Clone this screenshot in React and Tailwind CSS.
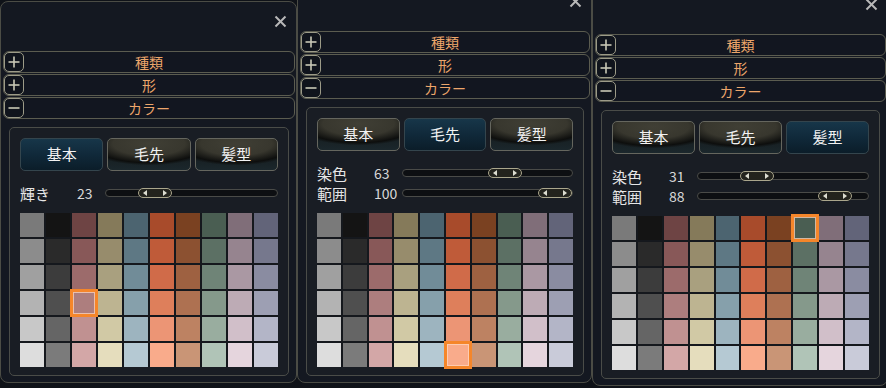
import React from 'react';

const COLORS = [
  ['#7a7a7a', '#8c8c8c', '#a0a0a0', '#b3b3b3', '#c8c8c8', '#dddddd'],
  ['#141414', '#2a2a2a', '#3c3c3c', '#4f4f4f', '#656565', '#7b7b7b'],
  ['#6e4444', '#885858', '#9c6b6b', '#ad7e7e', '#c09191', '#d3a7a7'],
  ['#857a5a', '#978c6c', '#a9a07f', '#bdb491', '#d1c9a5', '#e5ddbd'],
  ['#4c6470', '#5e7884', '#718c98', '#86a0ab', '#9db4bf', '#b5c9d3'],
  ['#a84b2b', '#bf5b39', '#d06b49', '#de7f5b', '#ec9575', '#f9ab8b'],
  ['#7a4121', '#8c5131', '#9e6141', '#ae7151', '#bd8262', '#c99576'],
  ['#4a5e52', '#5c7064', '#6f8477', '#85998b', '#99ad9f', '#b0c4b7'],
  ['#806e79', '#96848f', '#aa98a3', '#bdabb5', '#d1bfc9', '#e5d5dd'],
  ['#626479', '#76788d', '#8a8ca1', '#9d9fb3', '#b3b5c7', '#c9cbd9'],
];

const PANELS = [
  { tab: 0, sliders: [['輝き', 23]], sel: [3, 2], className: 'mt-[1px] w-[297px]' },
  { tab: 1, sliders: [['染色', 63], ['範囲', 100]], sel: [5, 5], className: 'mt-[-19px] w-[295px]' },
  { tab: 2, sliders: [['染色', 31], ['範囲', 88]], sel: [0, 7], className: 'mt-[-16px] w-[296px]' },
];

const font = { fontFamily: '"Noto Sans CJK JP", "Noto Sans", sans-serif' };

function SignBox({ open }) {
  return (
    <div className="w-[20px] h-[20px] rounded-[5px] border-[1.5px] border-[#9c9b88] bg-[#10141c] flex items-center justify-center">
      <svg width="14" height="14" viewBox="0 0 14 14">
        <line x1="1.5" y1="7" x2="12.5" y2="7" stroke="#c9c8b6" strokeWidth="1.6" />
        {!open && <line x1="7" y1="1.5" x2="7" y2="12.5" stroke="#c9c8b6" strokeWidth="1.6" />}
      </svg>
    </div>
  );
}

function AccordionRow({ label, open }) {
  return (
    <div className="h-[22px] rounded-[6px] border border-[#5b5c50] bg-[#121620] grid grid-cols-[20px_1fr_20px] items-center">
      <SignBox open={open} />
      <span className="text-center text-[14px] leading-none text-[#eda66b]">{label}</span>
      <span />
    </div>
  );
}

function Tab({ label, active }) {
  return (
    <div
      className={
        'h-[33px] rounded-[5px] border flex items-center justify-center text-[15px] text-[#f2f2f2] ' +
        (active
          ? 'border-[#34454d] bg-[linear-gradient(180deg,#173649_0%,#10293a_50%,#0b1d29_100%)]'
          : 'border-[#65665e] bg-[radial-gradient(ellipse_80%_70%_at_50%_15%,#403f35_0%,#38372e_55%,#0d0e0d_88%,transparent_100%),linear-gradient(180deg,#111313_0%,#1b272c_100%)]')
      }
    >
      {label}
    </div>
  );
}

function Slider({ label, value }) {
  return (
    <div className="h-[20px] flex items-center">
      <span className="w-[57px] text-[15px] text-[#e6e6e6] leading-none">{label}</span>
      <span className="w-[28px] text-[14px] text-[#d8d8d8] leading-none">{value}</span>
      <div className="relative flex-1 h-[8px] rounded-full border border-[#4a4b48] bg-[#0d0f12]">
        <div
          className="absolute top-[-2px] w-[34px] h-[10px] rounded-full border border-[#aaa68c] bg-[#23231d] flex items-center justify-between px-[4px]"
          style={{ left: `calc((100% - 34px) * ${value / 100})` }}
        >
          <svg width="4" height="6" viewBox="0 0 4 6"><polygon points="4,0 0,3 4,6" fill="#dcdcd0" /></svg>
          <svg width="4" height="6" viewBox="0 0 4 6"><polygon points="0,0 4,3 0,6" fill="#dcdcd0" /></svg>
        </div>
      </div>
    </div>
  );
}

function Palette({ sel }) {
  const cells = [];
  for (let r = 0; r < 6; r++) {
    for (let c = 0; c < 10; c++) {
      const selected = sel[0] === r && sel[1] === c;
      cells.push(
        <div key={r + '-' + c} className="relative h-[24px]" style={{ backgroundColor: COLORS[c][r] }}>
          {selected && (
            <div className="absolute inset-[-2px] border-[3px] border-[#f5862a] shadow-[inset_0_0_0_1px_rgba(255,214,190,0.75)]" />
          )}
        </div>
      );
    }
  }
  return <div className="mt-[10px] grid grid-cols-10 gap-[2px] bg-[#15181d]">{cells}</div>;
}

function Panel({ tab, sliders, sel, className }) {
  return (
    <div className={'shrink-0 rounded-[8px] border border-[#4b4c45] bg-[#141821] flex flex-col ' + className}>
      <div className="h-[49px] shrink-0 flex justify-end pt-[13px] pr-[9px]">
        <svg width="13" height="13" viewBox="0 0 13 13">
          <line x1="1.5" y1="1.5" x2="11.5" y2="11.5" stroke="#b9b9b9" strokeWidth="2" />
          <line x1="11.5" y1="1.5" x2="1.5" y2="11.5" stroke="#b9b9b9" strokeWidth="2" />
        </svg>
      </div>
      <div className="ml-[2px] mr-px flex flex-col gap-px">
        <AccordionRow label="種類" />
        <AccordionRow label="形" />
        <AccordionRow label="カラー" open />
      </div>
      <div className="mt-[8px] mb-[6px] ml-[8px] mr-[7px] rounded-[5px] border border-[#4a4c48] bg-[#191d24] px-[10px] pt-[10px] pb-[8px]">
        <div className="grid grid-cols-3 gap-[4px]">
          <Tab label="基本" active={tab === 0} />
          <Tab label="毛先" active={tab === 1} />
          <Tab label="髪型" active={tab === 2} />
        </div>
        <div className="mt-[12px]">
          {sliders.map(([l, v]) => (
            <Slider key={l} label={l} value={v} />
          ))}
        </div>
        <Palette sel={sel} />
      </div>
    </div>
  );
}

export default function App() {
  return (
    <div className="w-[886px] h-[388px] overflow-hidden bg-[#0f1218] flex items-start" style={font}>
      {PANELS.map((p, i) => (
        <Panel key={i} {...p} />
      ))}
    </div>
  );
}
